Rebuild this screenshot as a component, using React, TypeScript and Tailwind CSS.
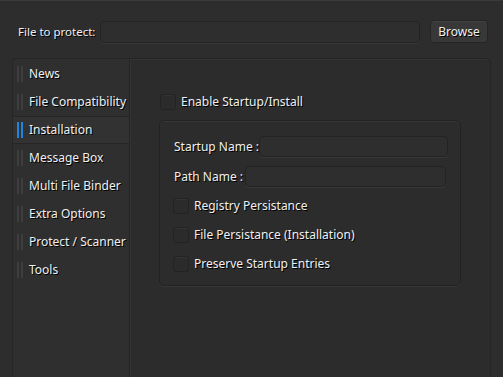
import React, { useState } from 'react';

const NAV_ITEMS = [
  'News',
  'File Compatibility',
  'Installation',
  'Message Box',
  'Multi File Binder',
  'Extra Options',
  'Protect / Scanner',
  'Tools',
];

const shadow = '[text-shadow:1px_1px_0_#000]';

const Checkbox: React.FC<{ label: string; className?: string }> = ({ label, className }) => {
  const [checked, setChecked] = useState(false);
  return (
    <label className={`flex items-center gap-[5px] cursor-default whitespace-nowrap ${className ?? ''}`}>
      <span
        onClick={() => setChecked(!checked)}
        className="w-[16px] h-[16px] shrink-0 rounded-[3px] bg-[#2b2b2b] border border-[#232323] shadow-[inset_0_1px_0_#333]"
      >
        {checked && <span className="block m-[4px] w-[6px] h-[6px] bg-[#1e7fd0]" />}
      </span>
      <span className={`text-[#f0f0f0] ${shadow}`}>{label}</span>
    </label>
  );
};

const TextBox: React.FC<{ className?: string }> = ({ className }) => (
  <div
    className={`h-[21px] shrink-0 rounded-[4px] bg-[#2e2e2e] border border-[#232323] shadow-[0_1px_0_#383838] ${className ?? ''}`}
  />
);

export default function App() {
  const [active, setActive] = useState('Installation');

  return (
    <div
      className="w-[503px] h-[377px] overflow-hidden bg-[#2d2d2d] border-t border-[#3a3a3a] text-[12px] leading-none"
      style={{ fontFamily: '"Noto Sans", "Open Sans", sans-serif' }}
    >
      {/* File picker row */}
      <div className="flex items-center pt-[19px] pl-[18px]">
        <span className={`w-[82px] text-[11.5px] text-[#f0f0f0] whitespace-nowrap ${shadow}`}>File to protect:</span>
        <div className="w-[320px] h-[22px] rounded-[4px] bg-[#2e2e2e] border border-[#232323] shadow-[0_1px_0_#383838]" />
        <button className="ml-[10px] w-[58px] h-[23px] rounded-[4px] bg-[#383838] border border-[#252525] text-[#f0f0f0] text-[12px] shadow-[inset_0_1px_0_#424242]">
          <span className={shadow}>Browse</span>
        </button>
      </div>

      <div className="flex mt-[15px] ml-[12px] h-[320px]">
        {/* Sidebar */}
        <div className="w-[117px] bg-[#2f2f2f] border-l border-t border-[#262626] rounded-tl-[4px] pt-[1px]">
          {NAV_ITEMS.map((item) => {
            const selected = item === active;
            return (
              <div
                key={item}
                onClick={() => setActive(item)}
                className={`flex items-center h-[28px] pl-[4px] whitespace-nowrap ${
                  selected ? 'bg-[#323232] border-y border-[#262626]' : 'border-y border-transparent'
                }`}
              >
                <span className="flex gap-[2px] mr-[6px]">
                  <span className={`w-[2px] h-[16px] ${selected ? 'bg-[#1c86e0]' : 'bg-[#3e3e3e]'}`} />
                  <span className={`w-[2px] h-[16px] ${selected ? 'bg-[#1c86e0]' : 'bg-[#3e3e3e]'}`} />
                </span>
                <span className={`text-[#f0f0f0] ${shadow}`}>{item}</span>
              </div>
            );
          })}
        </div>

        {/* Main panel */}
        <div className="w-[362px] bg-[#2c2c2c] border-l border-t border-r border-[#252525] rounded-tr-[5px] shadow-[inset_1px_1px_0_#333] pl-[29px] pt-[35px]">
          <Checkbox label="Enable Startup/Install" className="ml-[1px]" />

          <div className="mt-[10px] w-[302px] h-[166px] rounded-[5px] border border-[#232323] shadow-[inset_0_1px_0_#363636,0_1px_0_#363636] px-[14px] pt-[15px]">
            <div className="flex items-center whitespace-nowrap">
              <span className={`text-[#f0f0f0] ${shadow}`}>Startup Name :</span>
              <TextBox className="ml-auto w-[189px]" />
            </div>
            <div className="flex items-center whitespace-nowrap mt-[9px]">
              <span className={`text-[#f0f0f0] ${shadow}`}>Path Name :</span>
              <TextBox className="ml-auto w-[201px]" />
            </div>
            <div className="flex flex-col gap-[13px] mt-[11px] -ml-[1px]">
              <Checkbox label="Registry Persistance" />
              <Checkbox label="File Persistance (Installation)" />
              <Checkbox label="Preserve Startup Entries" />
            </div>
          </div>
        </div>
      </div>
    </div>
  );
}
